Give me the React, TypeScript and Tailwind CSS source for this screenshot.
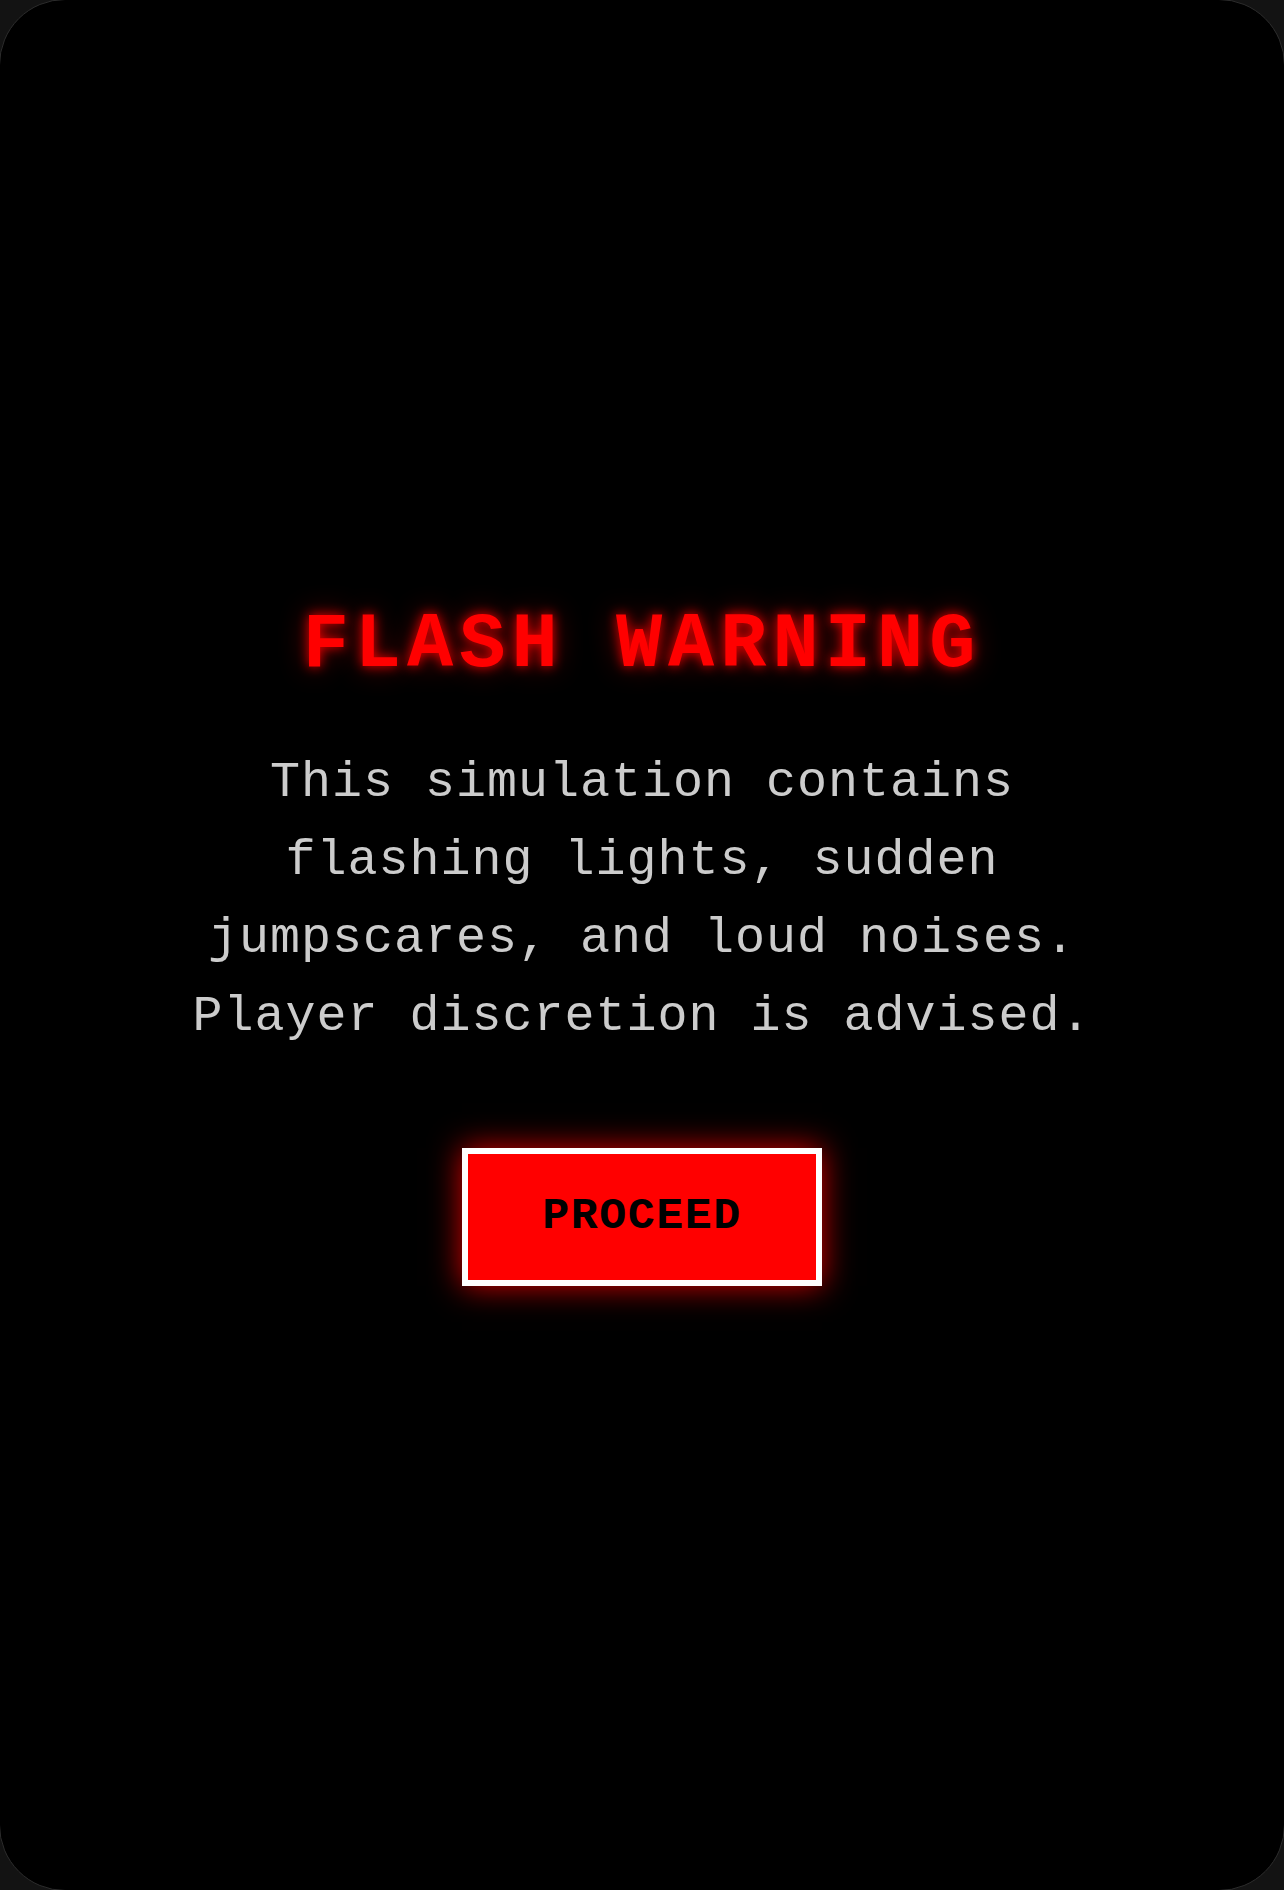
export default function App() {
  return (
    <div className="h-screen w-full overflow-hidden bg-[#131313] font-['Liberation_Mono','Courier_New',monospace]">
      {/* panel border sits just past the window edge, so only the rounded corners show it */}
      <div className="-m-px flex h-[calc(100%+2px)] w-[calc(100%+2px)] flex-col items-center justify-center rounded-[66px] border border-[#2c2c2c] bg-black pb-[16px]">
        {/* warning title with red glow */}
        <h1 className="text-[77px] leading-normal font-bold tracking-[6px] text-[#ff0000] [text-shadow:0_0_12px_rgba(255,0,0,0.9),0_0_28px_rgba(255,0,0,0.45)]">
          FLASH WARNING
        </h1>

        <p className="mt-[40px] max-w-[960px] text-center text-[50px] leading-[78px] tracking-[1px] text-[#cccccc]">
          This simulation contains flashing lights, sudden jumpscares, and loud noises. Player discretion is advised.
        </p>

        <button className="mt-[92px] flex h-[138px] w-[360px] items-center justify-center border-[6px] border-white bg-[#ff0000] text-[45px] font-bold tracking-[1.5px] text-black shadow-[0_0_30px_rgba(255,0,0,0.85)]">
          PROCEED
        </button>
      </div>
    </div>
  )
}
